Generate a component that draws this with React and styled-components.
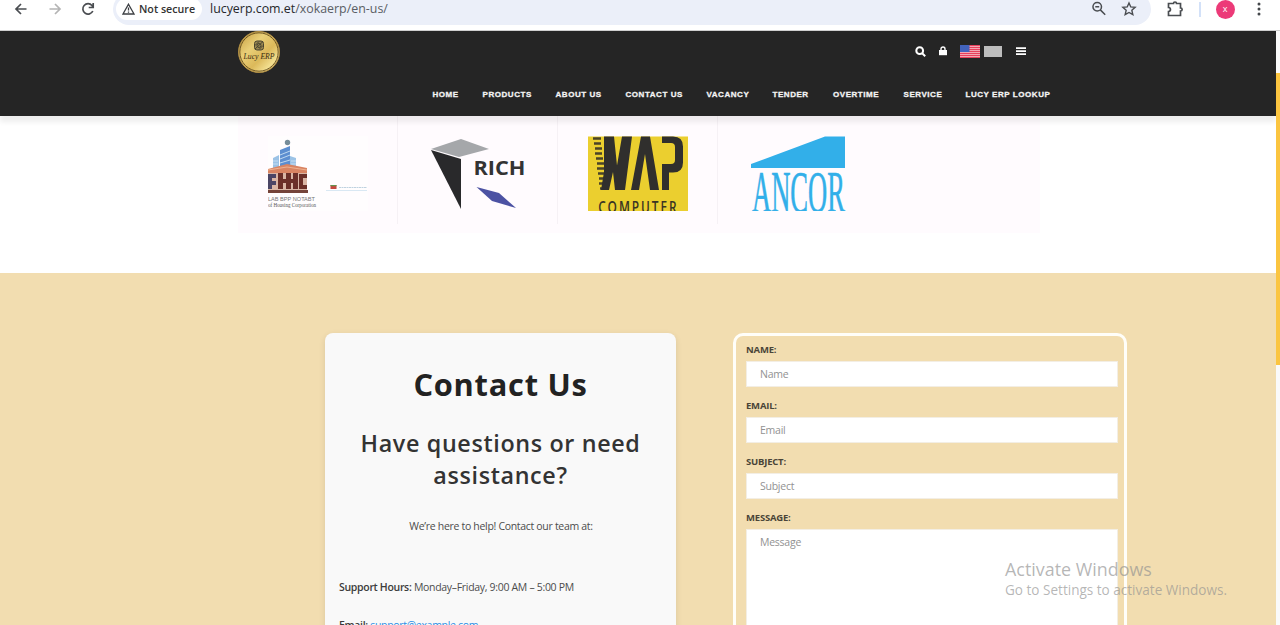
import React from "react";
import styled, { createGlobalStyle } from "styled-components";

const GlobalStyle = createGlobalStyle`
  *, *::before, *::after { box-sizing: border-box; }
  html, body { margin: 0; padding: 0; overflow: hidden; background: #fff; }
  body { font-family: "Open Sans", "Noto Sans", sans-serif; color: #444; }
  svg { display: block; flex: none; }
`;

const Screen = styled.div`
  position: relative;
  display: flex;
  flex-direction: column;
  width: 1280px;
  height: 625px;
  overflow: hidden;
`;

/* Browser toolbar */
const Toolbar = styled.div`
  flex: none;
  height: 31px;
  border-bottom: 1px solid #cfcfcf;
  overflow: hidden;
  background: #fff;
`;
const ToolbarRow = styled.div`
  display: flex;
  align-items: center;
  height: 34px;
  margin-top: -8px;
  padding-left: 12px;
`;
const NavIcons = styled.div`
  display: flex;
  gap: 15.5px;
  width: 101px;
`;
const AddressBar = styled.div`
  display: flex;
  align-items: center;
  width: 1038px;
  height: 32px;
  padding: 0 14px 0 3px;
  border-radius: 16px;
  background: #ebeff9;
`;
const SecurityChip = styled.div`
  display: flex;
  align-items: center;
  gap: 4px;
  width: 86px;
  height: 22px;
  padding-left: 6px;
  border-radius: 12px;
  background: #fff;
  color: #333;
  font: 600 10.7px/22px "Open Sans", sans-serif;
  white-space: nowrap;
`;
const Url = styled.div`
  flex: 1;
  margin-left: 8px;
  color: #5a5e64;
  font: 400 12.4px/20px "Open Sans", sans-serif;
  b { font-weight: 400; color: #26282b; }
`;
const AddressIcons = styled.div`
  display: flex;
  gap: 14px;
`;
const ToolbarEnd = styled.div`
  display: flex;
  align-items: center;
  margin-left: 15px;
`;
const Divider = styled.div`
  width: 2px;
  height: 15px;
  margin: 0 14.5px 0 15px;
  background: #d3e1f8;
`;
const Avatar = styled.div`
  width: 19px;
  height: 19px;
  margin-right: 17px;
  border-radius: 50%;
  background: #ec3a78;
  color: #fff;
  text-align: center;
  font: 400 9px/18px "Open Sans", sans-serif;
`;

/* Viewport */
const Viewport = styled.div`
  flex: 1;
  display: flex;
  min-height: 0;
`;
const Page = styled.div`
  width: 1276px;
  display: flex;
  flex-direction: column;
  overflow: hidden;
`;
const ScrollTrack = styled.div`
  width: 4px;
  padding-top: 42px;
  background: #fafafa;
`;
const ScrollThumb = styled.div`
  height: 292px;
  background: #fbc540;
`;

/* Site header */
const Header = styled.header`
  flex: none;
  position: relative;
  height: 85px;
  padding-left: 238px;
  background: #252525;
  box-shadow: 0 6px 5px rgba(0, 0, 0, 0.07);
`;
const HeaderTop = styled.div`
  display: flex;
  align-items: flex-start;
  height: 42px;
`;
const Tools = styled.div`
  display: flex;
  align-items: center;
  height: 40px;
  margin-left: 635px;
`;
const LangBox = styled.div`
  width: 18px;
  height: 11px;
  margin: 0 14px 0 4px;
  background: #bdbdbd;
`;
const Menu = styled.nav`
  display: flex;
  height: 43px;
  padding-left: 194.500px;
`;
const MenuItem = styled.a`
  flex: none;
  width: ${(p) => p.$w}px;
  color: #f4f4f4;
  font: 700 8px/43px "Liberation Sans", Arial, sans-serif;
  letter-spacing: 0.55px;
  -webkit-text-stroke: 0.3px #f4f4f4;
  white-space: nowrap;
`;

/* Client logos */
const ClientsSection = styled.section`
  flex: none;
  height: 157px;
  padding-left: 238px;
  background: #fff;
`;
const ClientStrip = styled.div`
  display: flex;
  width: 802px;
  height: 117px;
  background: #fffbfe;
`;
const ClientCell = styled.div`
  width: 160px;
  height: 108px;
  padding: 20px 0 0 30px;
  border-right: 1px solid ${(p) => (p.$last ? "transparent" : "#f6f1f5")};
`;

/* Contact */
const ContactSection = styled.section`
  flex: 1;
  display: flex;
  align-items: flex-start;
  gap: 57px;
  padding: 60px 0 0 325px;
  background: #f2ddb0;
`;
const Card = styled.div`
  width: 351px;
  height: 400px;
  padding: 28px 14px;
  border-radius: 8px;
  background: #f9f9f9;
  box-shadow: 0 2px 6px rgba(0, 0, 0, 0.1);
  color: #4c4c4c;
  font-size: 10.5px;
`;
const Title = styled.h1`
  margin: 0;
  text-align: center;
  color: #222;
  font: 700 30.8px/46px "Open Sans", sans-serif;
  letter-spacing: 0.75px;
`;
const Subtitle = styled.h2`
  margin: 20px 0 0;
  text-align: center;
  color: #333;
  font: 600 23.3px/32px "Open Sans", sans-serif;
  letter-spacing: 0.65px;
`;
const Lead = styled.p`
  margin: 25px 0 0;
  padding-left: 1px;
  text-align: center;
  line-height: 20px;
  letter-spacing: -0.31px;
`;
const Detail = styled.p`
  margin: ${(p) => p.$top}px 0 0;
  line-height: 20px;
  letter-spacing: -0.31px;
  b { font-weight: 600; color: #3c3c3c; }
  a { color: #2a8fe6; text-decoration: underline; }
`;
const Form = styled.form`
  width: 394px;
  height: 400px;
  padding: 5px 6px 0 10px;
  border: 3px solid #fffef9;
  border-radius: 10px;
`;
const Field = styled.label`
  display: flex;
  flex-direction: column;
  height: 56px;
  color: #4a4538;
  font: 700 9.500px/17px "Open Sans", sans-serif;
  letter-spacing: -0.2px;
`;
const fieldBox = `
  width: 372px;
  margin-top: 3px;
  padding: 0 13px;
  border: 1px solid #f3eee4;
  border-radius: 0;
  background: #fff;
  outline: none;
  resize: none;
  font: 400 10.5px/24px "Open Sans", sans-serif;
  letter-spacing: -0.25px;
  &::placeholder { color: #929292; opacity: 1; }
`;
const Input = styled.input`${fieldBox} height: 26px;`;
const TextArea = styled.textarea`${fieldBox} flex: none; height: 180px;`;

const Watermark = styled.div`
  position: absolute;
  left: 1005px;
  top: 557px;
  color: rgba(145, 145, 145, 0.66);
  font: 400 17.9px/24px "Open Sans", sans-serif;
  white-space: nowrap;
  div { font-size: 13.55px; line-height: 19px; }
`;

const Stroke = ({ size = 18, color = "#4a4d51", w = 1.7, children }) => (
  <svg width={size} height={size} viewBox="0 0 18 18" fill="none" stroke={color} strokeWidth={w}>
    {children}
  </svg>
);

const GoldLogo = () => (
  <svg width="42" height="42" viewBox="0 0 42 42">
    <defs>
      <linearGradient id="gold" x1="0" y1="0" x2="1" y2="1">
        <stop offset="0" stopColor="#c49a3c" />
        <stop offset="0.35" stopColor="#e9cf78" />
        <stop offset="0.6" stopColor="#dcb95a" />
        <stop offset="0.8" stopColor="#f3df90" />
        <stop offset="1" stopColor="#b88a30" />
      </linearGradient>
    </defs>
    <circle cx="21" cy="21" r="20.5" fill="url(#gold)" stroke="#b08d42" />
    <circle cx="21" cy="21" r="19.2" fill="none" stroke="#5d4618" strokeWidth="0.9" />
    <g fill="none" stroke="#4a4530" strokeWidth="1">
      <rect x="16.5" y="10" width="9" height="9" rx="2.5" fill="#9a8850" />
      <path d="M17 14.500l4-4 M17 18l8-7.500 M21 18.500l4-4" />
      <circle cx="21" cy="14.500" r="2" />
    </g>
    <text x="21" y="27.500" textAnchor="middle" fill="#3b2d12" fontFamily="Liberation Serif, serif" fontStyle="italic" fontSize="8.200" textLength="31" lengthAdjust="spacingAndGlyphs">Lucy ERP</text>
  </svg>
);

const Flag = () => (
  <svg width="20" height="13" viewBox="0 0 20 13">
    <rect width="20" height="13" fill="#f6d3d9" />
    {[0, 2, 4, 6, 8, 10, 12].map((y) => (
      <rect key={y} y={y} width="20" height="1.300" fill="#e8405c" />
    ))}
    <rect width="9.500" height="7" fill="#4263bd" />
  </svg>
);

const HousingLogo = () => (
  <svg width="100" height="75" viewBox="0 0 100 75">
    <rect width="100" height="75" fill="#fffdfe" />
    <circle cx="19.500" cy="6.500" r="2.700" fill="#758c99" />
    <path d="M5 22l6-3v14H5z M22 20l6 2v12h-6z" fill="#9cc3e6" />
    <path d="M12 14l10-4v24H12z" fill="#5c8ed0" />
    <path d="M12 19l10-4M12 23l10-4M12 27l10-3M5 25h5M5 28h5M23 25h5M23 28h5" stroke="#c9e0f4" strokeWidth="0.900" />
    <path d="M0 33l19-5 20 4v6H0z" fill="#d98462" />
    <path d="M0 34l19-3 20 3" fill="none" stroke="#efb18f" />
    <path d="M0 37h39v17H0z" fill="#d9b5a4" />
    <path d="M0 38h8v4H4v3h4v4H4v4H0z" fill="#4b4565" />
    <path d="M10 37h5v6h3v-6h5v6h2v-6h5v16h-5v-6h-2v6h-5v-6h-3v6h-5z M31 38h8v4h-4v7h4v4h-8z" fill="#6b2f28" />
    <path d="M0 54h40v3H0z" fill="#744339" />
    <text x="0" y="65" fontFamily="Liberation Sans, sans-serif" fontSize="5.500" fill="#777" textLength="47" lengthAdjust="spacingAndGlyphs">LAB BPP NOTABT</text>
    <text x="0" y="71" fontFamily="Liberation Serif, serif" fontSize="5.500" fill="#555" textLength="48" lengthAdjust="spacingAndGlyphs">of Housing Corporation</text>
    <rect x="62.500" y="49" width="6" height="4" fill="#c64840" />
    <rect x="62.500" y="49" width="6" height="1.200" fill="#63944e" />
    <path d="M71 51.500h28" stroke="#bfd2e0" strokeWidth="1" strokeDasharray="2 .5" />
    <path d="M58 54.500h41" stroke="#cfe2f0" strokeWidth="0.800" />
  </svg>
);

const RichLogo = () => (
  <svg width="100" height="75" viewBox="0 0 100 75">
    <path d="M3 13L33 3l28 10-30 8z" fill="#a5a7aa" />
    <path d="M3 14l30 9v50z" fill="#29292b" />
    <path d="M48.500 51l22.500 6 17 15-24-7z" fill="#4c52a3" />
    <text x="45.500" y="38.500" fontFamily="Open Sans, sans-serif" fontWeight="700" fontSize="20" fill="#333" textLength="52" lengthAdjust="spacingAndGlyphs">RICH</text>
  </svg>
);

const WapLogo = () => (
  <svg width="100" height="75" viewBox="0 0 100 75">
    <rect width="100" height="74.500" y="0.500" fill="#ebcf2f" />
    <path d="M5 2.500h8M6 7.500h7M7 12.500h7M7 17.500h7M8 22.500h7M9 27.500h7M9 32.500h7M10 37.500h7M11 42.500h7M11 47.500h7M12 52.500h8" stroke="#4a4328" strokeWidth="2.600" />
    <path d="M16 .5h10l3 29 5-29h10L37 54H27l-2-18-4 18h-8l3-18z" fill="#302f2d" />
    <path d="M53 .5h9L71 54h-9l-5-36-6 36h-8z" fill="#302f2d" />
    <path d="M74 .5h11q10 0 10 10v16q0 10-10 10h-4V54h-7V28h9q4 0 4-4V11q0-4-4-4h-9z" fill="#302f2d" />
    <text x="14.500" y="77" fontFamily="Open Sans, sans-serif" fontWeight="600" fontSize="17" fill="#3a3524" transform="scale(.7 1)" textLength="112">COMPUTER</text>
  </svg>
);

const AncorLogo = () => (
  <svg width="100" height="75" viewBox="0 0 100 75">
    <path d="M3 28L77 .5h20V32H3z" fill="#32afe9" />
    <text x="4" y="76" fontFamily="Liberation Serif, serif" fontSize="60" fill="#32afe9" stroke="#32afe9" strokeWidth="0.700" textLength="93" lengthAdjust="spacingAndGlyphs">ANCOR</text>
  </svg>
);

const MENU = [
  ["HOME", 50], ["PRODUCTS", 73], ["ABOUT US", 70], ["CONTACT US", 81], ["VACANCY", 66],
  ["TENDER", 60.5], ["OVERTIME", 70.5], ["SERVICE", 62], ["LUCY ERP LOOKUP", 90],
];

export default function App() {
  return (
    <Screen>
      <GlobalStyle />
      <Toolbar>
        <ToolbarRow>
          <NavIcons>
            <Stroke><path d="M14.500 9H4M9 4L4 9l5 5" /></Stroke>
            <Stroke color="#b4b4b4"><path d="M3.500 9H14M9 4l5 5-5 5" /></Stroke>
            <Stroke><path d="M13.800 11A5.200 5.200 0 1 1 13 5.500L14 7M14.200 3v4.500H9.700" /></Stroke>
          </NavIcons>
          <AddressBar>
            <SecurityChip>
              <svg width="13" height="12" viewBox="0 0 13 12" fill="none" stroke="#3c3f43" strokeWidth="1.300">
                <path d="M6.500 1.200L12 11H1z M6.500 4.500v3M6.500 8.400v1.300" />
              </svg>
              Not secure
            </SecurityChip>
            <Url><b>lucyerp.com.et</b>/xokaerp/en-us/</Url>
            <AddressIcons>
              <Stroke size={16} w={1.7}>
                <circle cx="7" cy="6.500" r="4.800" /><path d="M10.500 10l5.500 5.500M4.800 6.500h4.400" />
              </Stroke>
              <Stroke size={16} w={1.6}>
                <path d="M9 2.200l2 4.500 4.900.5-3.700 3.300 1.100 4.900L9 12.900l-4.300 2.500 1.100-4.900L2.100 7.200 7 6.700z" />
              </Stroke>
            </AddressIcons>
          </AddressBar>
          <ToolbarEnd>
            <Stroke size={18}>
              <path d="M2.500 3.500H7.500C7.500 1.500 10.500 1.500 10.500 3.500h4V8c2.200 0 2.200 3 0 3v4.500h-12V11.500c2.600-.3 2.600-3.700 0-4z" />
            </Stroke>
            <Divider />
            <Avatar>x</Avatar>
            <svg width="14" height="16" viewBox="0 0 14 16" fill="#44474b">
              <circle cx="7" cy="3" r="1.500" /><circle cx="7" cy="8" r="1.500" /><circle cx="7" cy="13" r="1.500" />
            </svg>
          </ToolbarEnd>
        </ToolbarRow>
      </Toolbar>

      <Viewport>
        <Page>
          <Header>
            <HeaderTop>
              <GoldLogo />
              <Tools>
                <svg width="11" height="11" viewBox="0 0 11 11" fill="none" stroke="#fff" strokeWidth="2">
                  <circle cx="4.700" cy="4.700" r="3.400" /><path d="M7.200 7.200l3 3" />
                </svg>
                <svg width="34" height="11" viewBox="0 0 34 11">
                  <path d="M13 4h8v5.200h-8z" fill="#fff" />
                  <path d="M15 4.500V3a2 2 0 0 1 4 0v1.500" fill="none" stroke="#fff" strokeWidth="1.400" />
                </svg>
                <Flag />
                <LangBox />
                <svg width="10" height="9" viewBox="0 0 10 9" stroke="#fff" strokeWidth="1.800">
                  <path d="M0 1.200h10M0 4.200h10M0 7.200h10" />
                </svg>
              </Tools>
            </HeaderTop>
            <Menu>
              {MENU.map(([label, w]) => <MenuItem key={label} $w={w}>{label}</MenuItem>)}
            </Menu>
          </Header>

          <ClientsSection>
            <ClientStrip>
              <ClientCell><HousingLogo /></ClientCell>
              <ClientCell><RichLogo /></ClientCell>
              <ClientCell><WapLogo /></ClientCell>
              <ClientCell $last><AncorLogo /></ClientCell>
            </ClientStrip>
          </ClientsSection>

          <ContactSection>
            <Card>
              <Title>Contact Us</Title>
              <Subtitle>Have questions or need assistance?</Subtitle>
              <Lead>We’re here to help! Contact our team at:</Lead>
              <Detail $top={41}><b>Support Hours:</b> Monday–Friday, 9:00 AM – 5:00 PM</Detail>
              <Detail $top={18}><b>Email:</b> <a>support@example.com</a></Detail>
            </Card>
            <Form>
              <Field>NAME:<Input placeholder="Name" /></Field>
              <Field>EMAIL:<Input placeholder="Email" /></Field>
              <Field>SUBJECT:<Input placeholder="Subject" /></Field>
              <Field>MESSAGE:<TextArea placeholder="Message" /></Field>
            </Form>
          </ContactSection>
        </Page>
        <ScrollTrack><ScrollThumb /></ScrollTrack>
      </Viewport>
      <Watermark>Activate Windows<div>Go to Settings to activate Windows.</div></Watermark>
    </Screen>
  );
}
